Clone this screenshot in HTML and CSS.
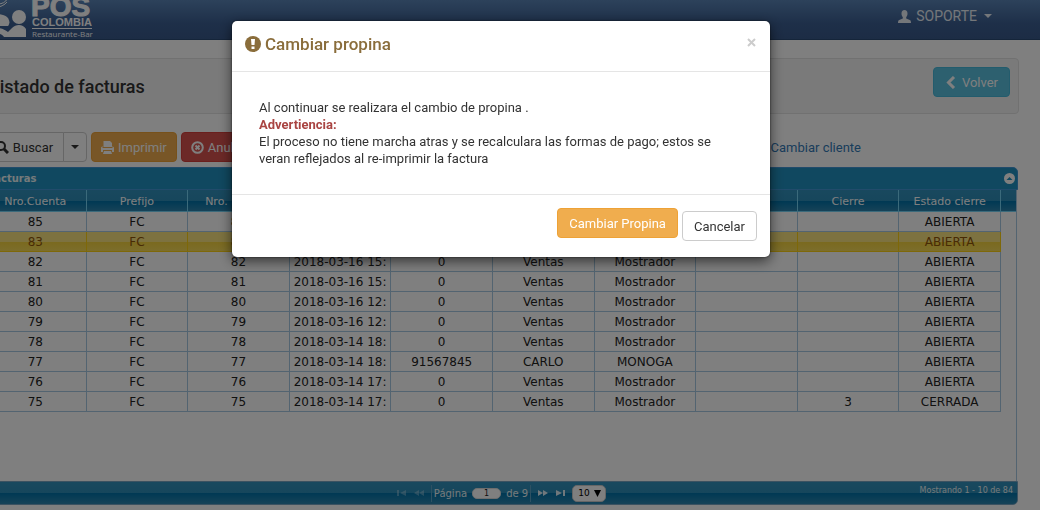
FILE: index.html
```
<!DOCTYPE html>
<html lang="es">
<head>
    <meta charset="UTF-8">
    <meta name="viewport" content="width=device-width, initial-scale=1">
    <title>Listado de facturas</title>
    <link rel="stylesheet" href="styles.css">
</head>
<body>
    <nav class="navbar">
        <a class="brand" href="#" aria-label="POS Colombia">
            <svg width="108" height="40" viewBox="-15 0 108 40" fill="#fff">
                <path d="M-5 8C0 7 5 5 7 2M-2 4C2 4 6 2 7-1" stroke="#fff" stroke-width="1" fill="none"/>
                <path d="M-16 17C-8 13 2 13 7 17C10 20 10 24 8 26H-16Z"/>
                <circle cx="19" cy="17" r="7"/>
                <path d="M-12 28H-2C2 28 5 30 8 32L12 28C16 24 23 24 26 29V37H4C2 34 -2 33 -12 32Z"/>
                <text class="logo-pos" x="31" y="16">POS</text>
                <text class="logo-name" x="32" y="26">COLOMBIA</text>
                <rect x="32" y="28" width="60" height="1"/>
                <text class="logo-sub" x="32" y="37">Restaurante-Bar</text>
            </svg>
        </a>
        <a class="user" href="#">
            <svg width="13" height="13" viewBox="0 0 13 13" fill="currentColor"><path d="M6.500 0C4.600 0 3.500 1.300 3.500 3.500C3.500 5.200 4 6.300 4.800 7V8.500L1.200 10C.4 10.400 0 11 0 13H13C13 11 12.600 10.400 11.800 10L8.200 8.500V7C9 6.300 9.500 5.200 9.500 3.500C9.500 1.300 8.400 0 6.500 0Z"/></svg>
            <span>SOPORTE</span>
            <i class="caret"></i>
        </a>
    </nav>

    <main class="page">
        <div class="well">
            <h1>Listado de facturas</h1>
            <button type="button" class="btn btn-info">
                <svg width="12" height="13" viewBox="0 0 12 13" fill="none" stroke="currentColor" stroke-width="3"><path d="M9 1L3.500 6.500L9 12"/></svg>
                Volver
            </button>
        </div>

        <div class="toolbar">
            <div class="btn-group">
                <button type="button" class="btn btn-default btn-search">
                    <svg width="13" height="13" viewBox="0 0 13 13" fill="none" stroke="currentColor" stroke-width="2"><circle cx="5" cy="5" r="4"/><path d="M8 8L12 12" stroke-width="3"/></svg>
                    Buscar
                </button>
                <button type="button" class="btn btn-default btn-caret" aria-label="Opciones"><i class="caret"></i></button>
            </div>
            <button type="button" class="btn btn-warning">
                <svg width="13" height="13" viewBox="0 0 13 13" fill="currentColor"><path d="M2.500 0H9L11 2V6H2.500Z"/><path d="M0 6.500L1.500 5V7H11.500V5L13 6.500V11H11V9H2V11H0Z"/><path d="M3 10H10L11 13H2Z"/></svg>
                Imprimir
            </button>
            <button type="button" class="btn btn-danger">
                <svg width="13" height="13" viewBox="0 0 13 13" fill="none" stroke="currentColor" stroke-width="2"><circle cx="6.500" cy="6.500" r="5.300"/><path d="M4.500 4.500L8.500 8.500M8.500 4.500L4.500 8.500"/></svg>
                Anular
            </button>
            <a class="link-client" href="#">Cambiar cliente</a>
        </div>

        <section class="grid">
            <header class="grid-title">
                <span>Facturas</span>
                <button type="button" class="collapse" aria-label="Contraer">
                    <svg width="11" height="11" viewBox="0 0 11 11"><circle cx="5.500" cy="5.500" r="5.500" fill="#fff"/><path d="M2.500 7L5.500 4L8.500 7Z" fill="#2191c0"/></svg>
                </button>
            </header>
            <div class="grid-view">
                <table>
                    <thead>
                        <tr><th>Nro.Cuenta</th><th>Prefijo</th><th>Nro. Factura</th><th>Fecha</th><th>Nit</th><th>Nombre</th><th>Apellido</th><th>Mesa</th><th>Cierre</th><th>Estado cierre</th></tr>
                    </thead>
                    <tbody>
                        <tr><td>85</td><td>FC</td><td>85</td><td>2018-03-16 15:</td><td>0</td><td>Ventas</td><td>Mostrador</td><td></td><td></td><td>ABIERTA</td></tr>
                        <tr class="selected"><td>83</td><td>FC</td><td>83</td><td>2018-03-16 15:</td><td>0</td><td>Ventas</td><td>Mostrador</td><td></td><td></td><td>ABIERTA</td></tr>
                        <tr><td>82</td><td>FC</td><td>82</td><td>2018-03-16 15:</td><td>0</td><td>Ventas</td><td>Mostrador</td><td></td><td></td><td>ABIERTA</td></tr>
                        <tr><td>81</td><td>FC</td><td>81</td><td>2018-03-16 15:</td><td>0</td><td>Ventas</td><td>Mostrador</td><td></td><td></td><td>ABIERTA</td></tr>
                        <tr><td>80</td><td>FC</td><td>80</td><td>2018-03-16 12:</td><td>0</td><td>Ventas</td><td>Mostrador</td><td></td><td></td><td>ABIERTA</td></tr>
                        <tr><td>79</td><td>FC</td><td>79</td><td>2018-03-16 12:</td><td>0</td><td>Ventas</td><td>Mostrador</td><td></td><td></td><td>ABIERTA</td></tr>
                        <tr><td>78</td><td>FC</td><td>78</td><td>2018-03-14 18:</td><td>0</td><td>Ventas</td><td>Mostrador</td><td></td><td></td><td>ABIERTA</td></tr>
                        <tr><td>77</td><td>FC</td><td>77</td><td>2018-03-14 18:</td><td>91567845</td><td>CARLO</td><td>MONOGA</td><td></td><td></td><td>ABIERTA</td></tr>
                        <tr><td>76</td><td>FC</td><td>76</td><td>2018-03-14 17:</td><td>0</td><td>Ventas</td><td>Mostrador</td><td></td><td></td><td>ABIERTA</td></tr>
                        <tr><td>75</td><td>FC</td><td>75</td><td>2018-03-14 17:</td><td>0</td><td>Ventas</td><td>Mostrador</td><td></td><td>3</td><td>CERRADA</td></tr>
                    </tbody>
                </table>
            </div>
            <footer class="pager">
                <div class="pager-nav">
                    <button type="button" class="nav-btn off" aria-label="Primera"><svg width="10" height="6" viewBox="0 0 10 6" fill="currentColor"><path d="M0 0H2V6H0ZM9 0V6L3 3Z"/></svg></button>
                    <button type="button" class="nav-btn off" aria-label="Anterior"><svg width="10" height="6" viewBox="0 0 10 6" fill="currentColor"><path d="M5 0V6L0 3ZM10 0V6L5 3Z"/></svg></button>
                    <label class="pager-page">Página <input type="text" value="1"> de 9</label>
                    <button type="button" class="nav-btn" aria-label="Siguiente"><svg width="10" height="6" viewBox="0 0 10 6" fill="currentColor"><path d="M0 0L5 3L0 6ZM5 0L10 3L5 6Z"/></svg></button>
                    <button type="button" class="nav-btn" aria-label="Última"><svg width="10" height="6" viewBox="0 0 10 6" fill="currentColor"><path d="M1 0L7 3L1 6ZM8 0H10V6H8Z"/></svg></button>
                    <span class="rows">
                        <select aria-label="Registros por página"><option>10</option><option>20</option><option>30</option></select>
                        <svg width="7" height="7" viewBox="0 0 7 7"><path d="M0 0H7L3.500 7Z"/></svg>
                    </span>
                </div>
                <span class="pager-info">Mostrando 1 - 10 de 84</span>
            </footer>
        </section>
    </main>

    <div class="backdrop">
        <div class="modal" role="dialog" aria-modal="true" aria-labelledby="modalTitle">
            <header class="modal-header">
                <svg width="16" height="16" viewBox="0 0 16 16"><circle cx="8" cy="8" r="8" fill="#8a6d3b"/><path d="M6 3H10L9.500 9H6.500ZM6.500 10.500H9.500V13H6.500Z" fill="#fff"/></svg>
                <h2 id="modalTitle">Cambiar propina</h2>
                <button type="button" class="close" aria-label="Cerrar"><svg width="9" height="9" viewBox="0 0 9 9" stroke="currentColor" stroke-width="2"><path d="M1 1L8 8M8 1L1 8"/></svg></button>
            </header>
            <div class="modal-body">
                Al continuar se realizara el cambio de propina .<br>
                <strong>Advertiencia:</strong><br>
                El proceso no tiene marcha atras y se recalculara las formas de pago; estos se veran reflejados al re-imprimir la factura
            </div>
            <footer class="modal-footer">
                <button type="button" class="btn btn-warning">Cambiar Propina</button>
                <button type="button" class="btn btn-default">Cancelar</button>
            </footer>
        </div>
    </div>
</body>
</html>
```
FILE: styles.css
```
* {
    box-sizing: border-box;
}
body {
    margin: 0;
    background: #fff;
    color: #333;
    font-family: Roboto, "Liberation Sans", sans-serif;
    font-size: 13px;
    line-height: 17px;
    overflow: hidden;
}
a {
    color: #337ab7;
    text-decoration: none;
}
svg {
    flex: none;
}

/* top bar */
.navbar {
    display: flex;
    justify-content: space-between;
    height: 40px;
    padding-right: 48px;
    margin-left: -15px;
    background: linear-gradient(#5a84b6, #3c5f92 60%, #39598a);
    border-bottom: 1px solid #2b4a75;
}
.brand {
    height: 40px;
}
.logo-pos {
    font: bold 28px "Liberation Sans", sans-serif;
    stroke: #fff;
    stroke-width: 1px;
}
.logo-name {
    font: bold 11px "Liberation Sans", sans-serif;
}
.logo-sub {
    font: 8px "Open Sans", sans-serif;
}
.user {
    display: flex;
    align-items: center;
    gap: 5px;
    height: 32px;
    color: #e8eef5;
    font-size: 14px;
}
.caret {
    border: 4px solid transparent;
    border-top-color: currentColor;
    border-bottom: 0;
}
.user .caret {
    margin-left: 2px;
}

/* page */
.page {
    margin: 18px 22px 0 -15px;
}
.well {
    display: flex;
    align-items: flex-start;
    justify-content: space-between;
    height: 56px;
    padding: 8px 8px 8px 4px;
    margin-right: -1px;
    background: #f5f5f5;
    border: 1px solid #e3e3e3;
    border-radius: 4px;
}
h1 {
    margin: 8px 0 0;
    font: 500 18px/24px Roboto, "Liberation Sans", sans-serif;
}
.btn {
    display: inline-flex;
    align-items: center;
    justify-content: center;
    gap: 5px;
    height: 30px;
    padding: 0 11px;
    border: 1px solid transparent;
    border-radius: 4px;
    color: #fff;
    font: inherit;
    cursor: pointer;
}
.btn-default {
    background: #fff;
    border-color: #ccc;
    color: #333;
}
.btn-info {
    background: #5bc0de;
    border-color: #46b8da;
}
.btn-warning {
    background: #f0ad4e;
    border-color: #eea236;
}
.btn-danger {
    background: #d9534f;
    border-color: #d43f3a;
}
.toolbar {
    display: flex;
    align-items: center;
    gap: 4px;
    margin: 18px 0 5px;
}
.toolbar .btn {
    gap: 4px;
    padding: 0 9px;
}
.btn-group {
    display: flex;
    width: 102px;
}
.btn-search {
    flex: 1;
    border-radius: 4px 0 0 4px;
}
.toolbar .btn-caret {
    margin-left: -1px;
    padding: 0 7px;
    border-radius: 0 4px 4px 0;
}
.link-client {
    margin-left: auto;
    margin-right: 157px;
}

/* invoice grid */
.grid {
    font-family: "DejaVu Sans", Verdana, sans-serif;
    font-size: 12px;
}
.grid-title {
    display: flex;
    align-items: center;
    justify-content: space-between;
    height: 23px;
    padding: 0 2px;
    background: #2191c0;
    border: 1px solid #4297d7;
    border-radius: 5px 5px 0 0;
    color: #eaf5f7;
    font-size: 10px;
    font-weight: bold;
}
.collapse {
    display: flex;
    padding: 0;
    border: 0;
    background: none;
}
.grid-view {
    height: 291px;
    padding-right: 15px;
    margin-right: 1px;
    border-right: 1px solid #a6c9e2;
    background: linear-gradient(#3291bd, #2d8db8 11px, #0072a8 11px, #2d86b0 21px, #77d5f7 21px, #77d5f7 22px, transparent 22px);
}
table {
    width: 100%;
    table-layout: fixed;
    border-collapse: separate;
    border-spacing: 0;
}
th {
    height: 22px;
    padding: 0;
    border-right: 1px solid #77d5f7;
    color: #fff;
    font-size: 11px;
    font-weight: normal;
    overflow: hidden;
    white-space: nowrap;
}
td {
    height: 20px;
    padding: 0 1px;
    background: #fff;
    border-right: 1px solid #a6c9e2;
    border-bottom: 1px solid #a6c9e2;
    color: #222;
    line-height: 16px;
    text-align: center;
    overflow: hidden;
    white-space: nowrap;
}
.selected td {
    background: linear-gradient(#fbe580 50%, #f5d33c 50%, #f8dc58);
    border-color: #fcd113;
    color: #915608;
}
.pager {
    display: grid;
    grid-template-columns: 1fr auto 1fr;
    align-items: center;
    height: 24px;
    padding: 0 4px;
    background: linear-gradient(#3291bd, #2d8db8 50%, #0072a8 50%, #2d86b0);
    border: 1px solid #77a5c2;
    border-radius: 0 0 5px 5px;
    color: #eaf5f7;
    font-size: 10px;
}
.pager-nav {
    grid-column: 2;
    display: flex;
    align-items: center;
    gap: 7px;
}
.nav-btn {
    display: flex;
    padding: 0;
    border: 0;
    background: none;
    color: #e0f0f8;
}
.off {
    opacity: 0.35;
}
.pager-page {
    display: flex;
    align-items: center;
    gap: 5px;
    padding: 0 2px;
    border: solid #5ba3c6;
    border-width: 0 1px;
}
.pager-page input {
    width: 29px;
    height: 11px;
    padding: 0;
    border: 1px solid #ddd;
    border-radius: 5px;
    background: #fff;
    color: #222;
    font: 8px "DejaVu Sans", sans-serif;
    text-align: center;
}
.rows {
    position: relative;
    display: flex;
}
.rows select {
    appearance: none;
    width: 34px;
    height: 17px;
    padding: 0 5px;
    border: 1px solid #ccc;
    border-radius: 5px;
    background: #fff;
    color: #000;
    font: 9px "DejaVu Sans", sans-serif;
}
.rows svg {
    position: absolute;
    right: 5px;
    top: 5px;
    pointer-events: none;
}
.pager-info {
    justify-self: end;
    align-self: start;
    font-size: 8px;
}

/* modal */
.backdrop {
    position: fixed;
    inset: 0;
    padding: 21px 38px 0 0;
    background: rgba(0, 0, 0, 0.5);
}
.modal {
    max-width: 538px;
    margin: 0 auto;
    background: #fff;
    border-radius: 5px;
    box-shadow: 0 4px 13px rgba(0, 0, 0, 0.6), 0 0 2px rgba(0, 0, 0, 0.7);
}
.modal-header {
    display: flex;
    align-items: center;
    gap: 4px;
    height: 51px;
    padding: 0 13px 4px;
    border-bottom: 1px solid #e5e5e5;
    color: #8a6d3b;
}
h2 {
    margin: 0;
    font: 500 17px/20px Roboto, "Liberation Sans", sans-serif;
}
.close {
    display: flex;
    padding: 0;
    margin: 0 1px 4px auto;
    border: 0;
    background: none;
    color: #ccc;
}
.modal-body {
    padding: 27px;
}
.modal-body strong {
    color: #a94442;
}
.modal-footer {
    display: flex;
    align-items: flex-end;
    justify-content: flex-end;
    gap: 4px;
    height: 63px;
    padding: 13px 13px 16px;
    border-top: 1px solid #e5e5e5;
}
.modal-footer .btn-warning {
    align-self: flex-start;
}
```
